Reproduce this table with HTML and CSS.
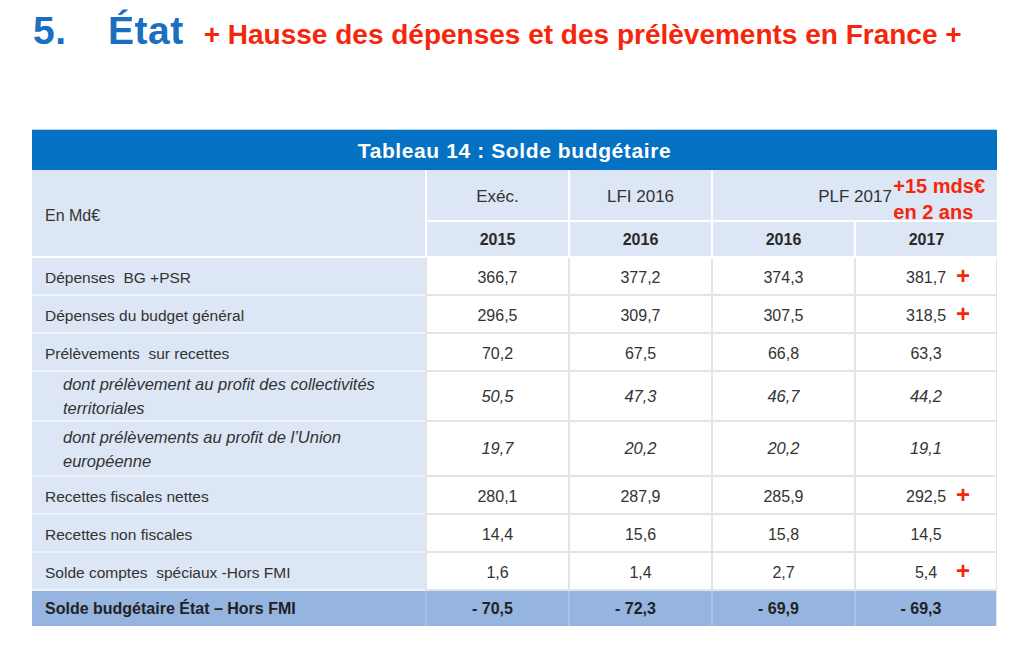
FILE: index.html
```html
<!DOCTYPE html>
<html lang="fr">
<head>
    <meta charset="UTF-8">
    <title>État - Solde budgétaire</title>
    <link rel="stylesheet" href="styles.css">
</head>
<body>
<!-- Titre de section -->
<div class="page-title">
    <span class="num">5.</span>
    <span class="name">État</span>
    <span class="note">+ Hausse des dépenses et des prélèvements en France +</span>
</div>

<!-- Tableau 14 -->
<div class="board">
    <div class="board-title">Tableau 14 : Solde budgétaire</div>
    <table class="budget">
        <colgroup>
            <col class="c-label">
            <col class="c-num">
            <col class="c-num">
            <col class="c-num">
            <col class="c-num">
        </colgroup>
        <thead>
            <tr class="head-1">
                <th class="label" rowspan="2">En Md€</th>
                <th>Exéc.</th>
                <th>LFI 2016</th>
                <th colspan="2" class="plf">PLF 2017<span class="callout">+15 mds€<br>en 2 ans</span></th>
            </tr>
            <tr class="head-2">
                <th>2015</th>
                <th>2016</th>
                <th>2016</th>
                <th>2017</th>
            </tr>
        </thead>
        <tbody>
            <tr class="r-std">
                <td class="label">Dépenses&nbsp; BG +PSR</td>
                <td>366,7</td><td>377,2</td><td>374,3</td>
                <td class="up">381,7<span class="plus">+</span></td>
            </tr>
            <tr class="r-std">
                <td class="label">Dépenses du budget général</td>
                <td>296,5</td><td>309,7</td><td>307,5</td>
                <td class="up">318,5<span class="plus">+</span></td>
            </tr>
            <tr class="r-std">
                <td class="label">Prélèvements&nbsp; sur recettes</td>
                <td>70,2</td><td>67,5</td><td>66,8</td><td>63,3</td>
            </tr>
            <tr class="r-sub r-sub1">
                <td class="label">dont prélèvement au profit des collectivités<br>territoriales</td>
                <td>50,5</td><td>47,3</td><td>46,7</td><td>44,2</td>
            </tr>
            <tr class="r-sub r-sub2">
                <td class="label">dont prélèvements au profit de l’Union<br>européenne</td>
                <td>19,7</td><td>20,2</td><td>20,2</td><td>19,1</td>
            </tr>
            <tr class="r-std">
                <td class="label">Recettes fiscales nettes</td>
                <td>280,1</td><td>287,9</td><td>285,9</td>
                <td class="up">292,5<span class="plus">+</span></td>
            </tr>
            <tr class="r-std">
                <td class="label">Recettes non fiscales</td>
                <td>14,4</td><td>15,6</td><td>15,8</td><td>14,5</td>
            </tr>
            <tr class="r-std">
                <td class="label">Solde comptes&nbsp; spéciaux -Hors FMI</td>
                <td>1,6</td><td>1,4</td><td>2,7</td>
                <td class="up">5,4<span class="plus">+</span></td>
            </tr>
            <tr class="r-total">
                <td class="label">Solde budgétaire État – Hors FMI</td>
                <td>- 70,5</td><td>- 72,3</td><td>- 69,9</td><td>- 69,3</td>
            </tr>
        </tbody>
    </table>
</div>
</body>
</html>
```

FILE: styles.css
```css
body {
    margin: 0;
    background: #fff;
    font-family: "Liberation Sans", Arial, sans-serif;
}
.page-title {
    display: flex;
    align-items: baseline;
    height: 62px;
    padding: 9px 0 0 33px;
    box-sizing: border-box;
    white-space: nowrap;
}
.page-title .num,
.page-title .name {
    color: #1a6fc0;
    font-weight: bold;
    font-size: 39px;
    letter-spacing: 0.5px;
}
.page-title .num {
    width: 75px;
}
.page-title .name {
    margin-right: 20px;
}
.page-title .note {
    color: #f5260c;
    font-weight: bold;
    font-size: 28px;
}
.board {
    margin: 67px 0 0 32px;
    width: 965px;
    border-top: 1px solid #a9d9ef;
}
.board-title {
    background: #0571c2;
    color: #fff;
    font-weight: bold;
    font-size: 21px;
    letter-spacing: 0.6px;
    text-align: center;
    height: 40px;
    line-height: 42px;
}
.budget {
    width: 965px;
    border-collapse: separate;
    border-spacing: 0;
    table-layout: fixed;
    font-size: 16px;
    color: #333;
}
.c-label { width: 393px; }
.c-num { width: 143px; }
.budget th {
    background: #dce6f4;
    font-weight: normal;
    border-left: 2px solid #fff;
    border-bottom: 2px solid #fff;
    padding: 0;
    position: relative;
}
.budget th.label {
    border-left: 0;
    text-align: left;
    padding-left: 13px;
    padding-top: 6px;
}
.head-1 th {
    height: 47px;
    font-size: 17px;
    padding-top: 3px;
}
.budget .head-1 th.label {
    font-size: 16px;
}
.head-2 th {
    height: 32px;
    font-weight: bold;
    font-size: 16px;
    color: #2a2a2a;
    padding-top: 2px;
}
.callout {
    position: absolute;
    right: 12px;
    top: 3px;
    color: #f5260c;
    font-weight: bold;
    font-size: 20px;
    line-height: 26px;
    text-align: left;
}
.budget td {
    background: #fff;
    text-align: center;
    padding: 0;
    border-left: 2px solid #e4e4e4;
    border-bottom: 2px solid #e4e4e4;
    position: relative;
}
.budget td:last-child {
    border-right: 1px solid #e4e4e4;
}
.budget td.label {
    background: #dce6f4;
    text-align: left;
    padding-left: 13px;
    border-left: 0;
    border-bottom: 2px solid #eef3fa;
    font-size: 15.5px;
}
.r-std td {
    height: 33px;
}
.budget .r-std td {
    padding-top: 3px;
}
.r-sub td {
    font-style: italic;
    font-size: 16.5px;
}
.budget .r-sub td.label {
    padding-left: 31px;
    line-height: 24px;
    font-size: 16.5px;
}
.r-sub1 td { height: 47px; }
.r-sub2 td { height: 53px; }
.budget .r-total td {
    height: 35px;
    background: #95b4df;
    font-weight: bold;
    font-size: 16px;
    color: #222;
    border-left-color: #a9c2e6;
    border-bottom: 0;
}
.r-total td:not(.label) {
    padding-right: 10px;
}
.plus {
    position: absolute;
    left: 100px;
    top: 50%;
    transform: translateY(-50%);
    color: #f5260c;
    font-weight: bold;
    font-size: 24px;
}
```
